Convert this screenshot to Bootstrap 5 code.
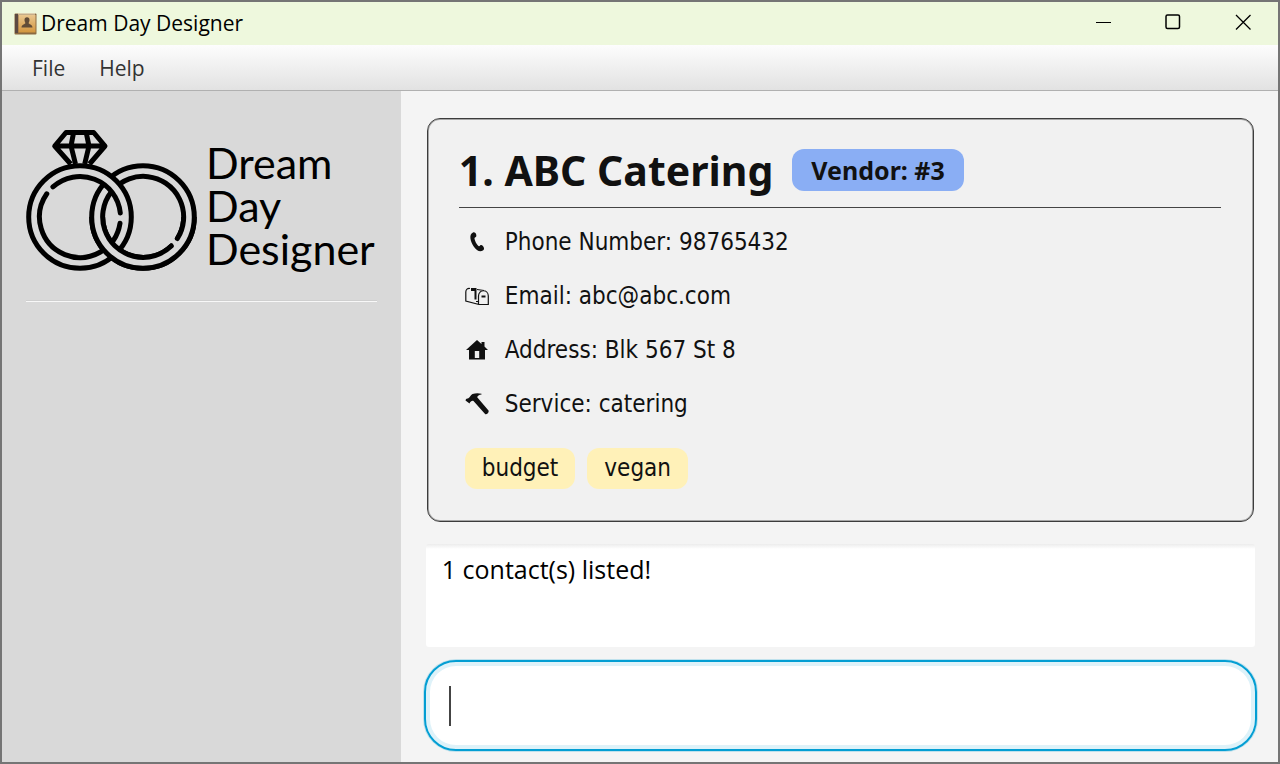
<!DOCTYPE html>
<html lang="en">
<head>
<meta charset="utf-8">
<meta name="viewport" content="width=device-width, initial-scale=1">
<title>Dream Day Designer</title>
<link href="https://cdn.jsdelivr.net/npm/bootstrap@5.3.0/dist/css/bootstrap.min.css" rel="stylesheet">
<style>
  body { font-family: "Open Sans", "Noto Sans", sans-serif; color: #111; background: #f4f4f4; }
  .app-window { border: 2px solid #757575; }
  .title-bar { height: 43px; background: #eef8dd; padding-left: 12px; }
  .title-bar h1 { font-size: 21px; font-weight: 400; color: #000; }
  .win-btn { width: 70px; height: 43px; border: 0; background: none; padding: 0 0 3px; }
  .win-btn svg { display: block; margin: 0 auto; }
  .menu-bar { height: 46px; background: linear-gradient(#fdfdfd, #e2e2e2); border-bottom: 1px solid #b0b0b0; padding-left: 13px; }
  .menu-bar button { border: 0; background: none; font-size: 21px; line-height: 28px; color: #333; padding: 0 17px; }
  .side-panel { flex: 0 0 31.25%; background: #d9d9d9; padding: 39px 24px; }
  .brand-name { font-family: Lato, sans-serif; font-size: 43px; line-height: 43px; color: #000; padding: 11px 0 0 8px; }
  .side-rule { border-top: 1px solid #cfcfcf; border-bottom: 1px solid #f8f8f8; margin-top: 28px; }
  .main-panel { padding: 27px 23px 11px 25px; }
  .contact-card { border: 1px solid #3c3c3c; border-radius: 13px; background: #f1f1f1; box-shadow: inset 0 0 0 1px #a6a6a6; padding: 30px 32px 32px 31px; margin: 0 1px; font-family: "DejaVu Sans Condensed", "DejaVu Sans", sans-serif; }
  .contact-name { font-family: "Noto Sans", sans-serif; font-size: 41px; line-height: 42px; font-weight: 700; margin: 0 19px 0 0; }
  .kind-pill { background: #8aaef4; border-radius: 12px; font-family: "Noto Sans", sans-serif; font-size: 25px; line-height: 42px; font-weight: 700; padding: 0 19px; }
  .card-line { border-bottom: 1px solid #444; padding-bottom: 16px; }
  .fact-row { height: 54px; font-size: 24px; padding-left: 6px; }
  .fact-list { padding-top: 7px; }
  .tag-row { padding: 17px 0 0 6px; }
  .tag-pill { background: #fff1b8; border-radius: 12px; font-size: 24px; line-height: 41px; padding: 0 17px; }
  .result-box { height: 103px; border: 0; border-radius: 3px; background: linear-gradient(#ececec, #fff 5px); color: #000; font-size: 25px; line-height: 32px; padding: 9px 16px; resize: none; margin-top: 22px; outline: 0; }
  .command-field { height: 91px; border: 2px solid #039ed3; border-radius: 32px; background: #fff; box-shadow: 0 0 0 1px #bfe1ec, inset 0 0 0 4px #def2f9; margin: 13px -2px 0; padding-left: 23px; }
  .command-field input { border: 0; background: none; outline: 0; font-size: 24px; caret-color: transparent; }
  .text-cursor { width: 2px; height: 40px; background: #444; }
</style>
</head>
<body>
<div class="app-window d-flex flex-column min-vh-100">
  <header class="title-bar d-flex align-items-center">
    <svg width="23" height="22" viewBox="0 0 23 22" aria-hidden="true">
      <defs><linearGradient id="cover" x2="0" y2="1"><stop stop-color="#e9c78f"/><stop offset="1" stop-color="#d3963f"/></linearGradient></defs>
      <rect width="22" height="21" x=".5" y=".5" rx="1" fill="#8b6a42"/>
      <rect x="1" y="1" width="3" height="19" fill="#5c4a42"/>
      <rect x="4.500" y="2" width="17" height="17.500" fill="url(#cover)"/>
      <path d="M4 1h17" stroke="#fff0d0"/>
      <path d="M10.500 7a2.500 2.700 0 0 1 5 0c0 1.500-.7 2.200-.9 3 .2 1.500 3.600 1 3.900 4.500h-11c.3-3.500 3.700-3 3.900-4.500-.2-.8-.9-1.500-.9-3z" fill="#614c37"/>
    </svg>
    <h1 class="mb-0 ms-1">Dream Day Designer</h1>
    <div class="d-flex ms-auto">
      <button class="win-btn" type="button" aria-label="Minimize"><svg width="16" height="16" stroke="#000"><path d="M1 8.500h15"/></svg></button>
      <button class="win-btn" type="button" aria-label="Maximize"><svg width="16" height="16" fill="none" stroke="#000" stroke-width="1.500"><rect x="1" y="1" width="13.500" height="13.500" rx="1.500"/></svg></button>
      <button class="win-btn" type="button" aria-label="Close"><svg width="16" height="16" stroke="#000" stroke-width="1.300"><path d="M1 1l14.500 14.500M15.500 1L1 15.500"/></svg></button>
    </div>
  </header>
  <nav class="menu-bar d-flex align-items-center" aria-label="Application menu">
    <button type="button">File</button>
    <button type="button">Help</button>
  </nav>
  <div class="d-flex flex-grow-1">
    <aside class="side-panel">
      <div class="d-flex">
        <svg class="flex-shrink-0" width="172" height="142" viewBox="0 0 172 142" fill="none" stroke="#000" stroke-width="5" stroke-linecap="round" stroke-linejoin="round" aria-hidden="true">
          <defs>
            <clipPath id="lower"><path d="M0 87h172v60H0z"/></clipPath>
            <g id="ringRight">
              <circle cx="117" cy="87" r="46" stroke="#d9d9d9" stroke-width="11"/>
              <circle cx="117" cy="87" r="51.300"/>
              <path d="M145.300 116A40.500 40.500 0 1 1 151.400 108.500"/>
            </g>
          </defs>
          <use href="#ringRight"/>
          <circle cx="54" cy="87" r="46" stroke="#d9d9d9" stroke-width="11"/>
          <circle cx="54" cy="87" r="51.300"/>
          <path d="M26.900 56.900A40.500 40.500 0 0 1 94.300 83M94 93.300A40.500 40.500 0 1 1 20.800 63.800"/>
          <use href="#ringRight" clip-path="url(#lower)"/>
          <path d="M44.700 34L28.700 16 40 2.500H67.700L79 16 63.500 34M28.700 16H79M47.500 3L45 16l4.500 18M60.300 3L63 16l-4.300 18" stroke-linecap="butt"/>
        </svg>
        <div class="brand-name">Dream<br>Day<br>Designer</div>
      </div>
      <div class="side-rule"></div>
    </aside>
    <main class="main-panel flex-grow-1 d-flex flex-column">
      <article class="contact-card">
        <div class="card-line d-flex align-items-center">
          <h2 class="contact-name">1. ABC Catering</h2>
          <span class="kind-pill">Vendor: #3</span>
        </div>
        <ul class="fact-list list-unstyled mb-0">
          <li class="fact-row d-flex align-items-center gap-3">
            <svg width="24" height="24" viewBox="0 0 24 24" fill="#111" aria-hidden="true"><path d="M8 2.500C9.500 2 11 3 11.300 5c.2 1.500-.3 2-1.200 2.500-.8.400-.8 1 0 3.200.9 2.400 2 4 3.400 5.200.8.600 1 .2 1.600-.5.800-.8 2-.4 3 .8 1.300 1.600 1.300 3.500-.2 4.400-3.200 1.700-6.400 0-9.200-4.200C5.500 11.500 3.500 4.500 8 2.500z"/></svg>
            <span>Phone Number: 98765432</span></li>
          <li class="fact-row d-flex align-items-center gap-3">
            <svg width="24" height="24" viewBox="0 0 24 24" fill="none" stroke="#111" stroke-width="1.200" aria-hidden="true"><path d="M14 20.500L.8 17V8C.8 5.500 2.500 4 5 4.500M12 5.500L19 6.500M13.500 20.500V12c0-7 9.800-7 9.800 0v8.500zM13.500 17.500h-2.500"/><path d="M6 4h5.500v11.500H9.500V7H6z" fill="#111" stroke="none"/><path d="M16.500 12.500h4" stroke-width="2"/></svg>
            <span>Email: abc@abc.com</span></li>
          <li class="fact-row d-flex align-items-center gap-3">
            <svg width="24" height="24" viewBox="0 0 24 24" fill="#111" fill-rule="evenodd" aria-hidden="true"><path d="M12 2l4.500 4V4h3v4.500L23 12h-3v9.500H4V12H1zM9.800 13v7h4.400v-7z"/></svg>
            <span>Address: Blk 567 St 8</span></li>
          <li class="fact-row d-flex align-items-center gap-3">
            <svg width="24" height="24" viewBox="0 0 24 24" fill="#111" aria-hidden="true"><path d="M7.500 2c3-1 6-1 9-.3v.8c-2.500.3-4 1.300-4.300 2.800L23.500 18.500c.8 1.500-1.200 4.300-3.200 3.700L8.500 9C7 8.300 5.500 9.500 4.500 11.500L.5 8.500C1 6.500 2 6.500 3 6.500 5 5.500 5.500 3 7.500 2z"/></svg>
            <span>Service: catering</span></li>
        </ul>
        <div class="tag-row d-flex">
          <span class="tag-pill me-2">budget</span>
          <span class="tag-pill ms-1">vegan</span>
        </div>
      </article>
      <textarea class="result-box w-100 d-block" readonly aria-label="Result">1 contact(s) listed!</textarea>
      <div class="command-field d-flex align-items-center">
        <span class="text-cursor" aria-hidden="true"></span>
        <input class="flex-grow-1" type="text" aria-label="Command">
      </div>
    </main>
  </div>
</div>
<script src="https://cdn.jsdelivr.net/npm/bootstrap@5.3.0/dist/js/bootstrap.bundle.min.js"></script>
</body>
</html>
